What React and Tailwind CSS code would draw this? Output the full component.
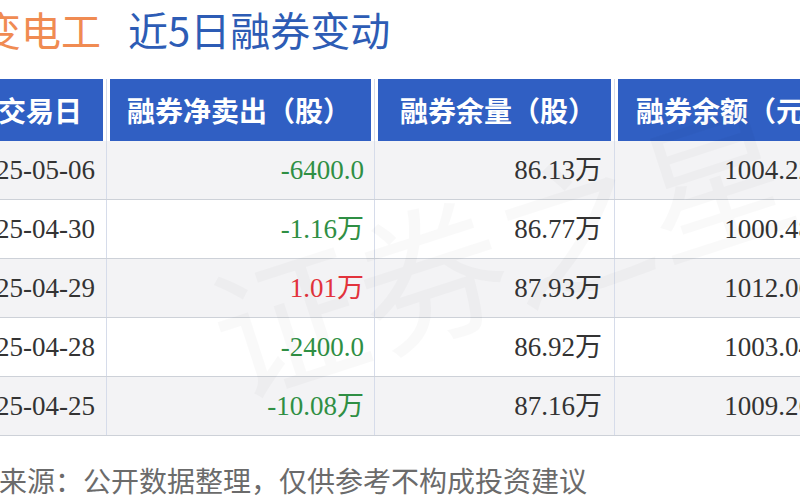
import React from "react";

const rows = [
  { date: "2025-05-06", net: "-6400.0", netColor: "text-[#2f8f44]", qty: "86.13万", amt: "1004.22万" },
  { date: "2025-04-30", net: "-1.16万", netColor: "text-[#2f8f44]", qty: "86.77万", amt: "1000.48万" },
  { date: "2025-04-29", net: "1.01万", netColor: "text-[#e2333c]", qty: "87.93万", amt: "1012.06万" },
  { date: "2025-04-28", net: "-2400.0", netColor: "text-[#2f8f44]", qty: "86.92万", amt: "1003.04万" },
  { date: "2025-04-25", net: "-10.08万", netColor: "text-[#2f8f44]", qty: "87.16万", amt: "1009.26万" },
];

const sans = "font-['Noto_Sans_CJK_SC','Noto_Sans',sans-serif]";
const serif = "font-['Liberation_Serif','Noto_Sans_CJK_SC',serif]";

const HeaderCell = ({ children, pad, last }) => (
  <div className={`h-full px-[3px] ${last ? "" : "border-r border-[#d6dcea]"}`}>
    <div className={`h-full bg-[#305fc3] flex items-center ${pad} text-white font-bold text-[28px] whitespace-nowrap`}>
      {children}
    </div>
  </div>
);

export default function App() {
  return (
    <div className={`relative w-[800px] h-[500px] overflow-hidden bg-white ${sans}`}>
      {/* title */}
      <div className="h-[79px] pt-[9px] flex whitespace-nowrap ml-[-59px] text-[40px] leading-none">
        <span className="text-[#f08b52] mr-[27px]">特变电工</span>
        <span className="text-[#2d5cb5]">近5日融券变动</span>
      </div>

      {/* table */}
      <div className="ml-[-45px] w-[896px]">
        <div className="grid grid-cols-[152px_268px_240px_236px] h-[62px]">
          <HeaderCell pad="pl-[40px]">交易日</HeaderCell>
          <HeaderCell pad="pl-[17px]">融券净卖出（股）</HeaderCell>
          <HeaderCell pad="pl-[22px]">融券余量（股）</HeaderCell>
          <HeaderCell pad="pl-[18px]" last>融券余额（元）</HeaderCell>
        </div>
        {rows.map((r, i) => (
          <div
            key={r.date}
            className={`grid grid-cols-[152px_268px_240px_236px] h-[59px] border-b border-[#cdd1d8] text-[27px] ${serif} ${
              i % 2 === 0 ? "bg-[#f3f3f5]" : "bg-white"
            }`}
          >
            <div className="flex items-center pl-[14px] border-r border-[#d6dcea] text-[#333]">{r.date}</div>
            <div className={`flex items-center justify-end pr-[10px] border-r border-[#d6dcea] ${r.netColor}`}>{r.net}</div>
            <div className="flex items-center justify-end pr-[12px] border-r border-[#d6dcea] text-[#333]">{r.qty}</div>
            <div className="flex items-center justify-end pr-[12px] text-[#333]">{r.amt}</div>
          </div>
        ))}
      </div>

      {/* footer */}
      <div className="pt-[30px] ml-[-57px] whitespace-nowrap text-[28px] leading-[28px] text-[#6b6b6b]">
        数据来源：公开数据整理，仅供参考不构成投资建议
      </div>

      {/* watermark */}
      <div className="absolute left-[200px] top-[170px] -rotate-[18deg] text-[150px] leading-none text-black/[0.025] whitespace-nowrap pointer-events-none">
        证券之星
      </div>
    </div>
  );
}
